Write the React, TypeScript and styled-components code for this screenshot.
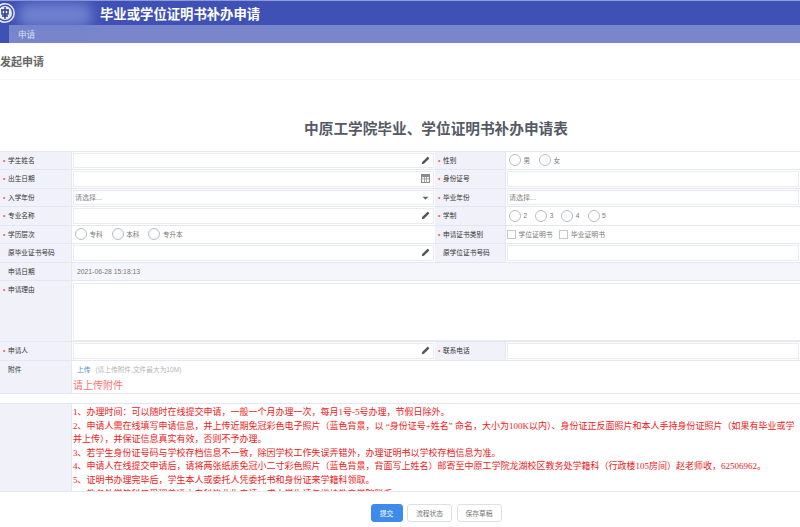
import type { ReactNode } from "react"
import styled, { createGlobalStyle } from "styled-components"

const GlobalStyle = createGlobalStyle`
    html, body {
        margin: 0;
        padding: 0;
        height: 100%;
        overflow: hidden;
        background: #fff;
        font-family: "Liberation Sans", "Noto Sans CJK SC", sans-serif;
    }
`

const Page = styled.div`
    display: flex;
    flex-direction: column;
    width: 800px;
    height: 527px;
    overflow: hidden;
`
const Header = styled.div`
    position: relative;
    z-index: 1;
    display: flex;
    align-items: center;
    flex: 0 0 25px;
    min-height: 0;
    height: 25px;
    background: #3f51b5;
    border-top: 1px solid #8f9bd8;
    box-sizing: border-box;
`
const Logo = styled.svg`
    flex: 0 0 16px;
    width: 16px;
    height: 24px;
`
const BlurredName = styled.div`
    width: 74px;
    height: 24px;
    margin: 3px 0 0 2px;
    background: #6f80cf;
    border-radius: 10px;
    filter: blur(6px);
`
const HeaderTitle = styled.div`
    margin-left: 8px;
    font-size: 13.35px;
    font-weight: 700;
    color: #fff;
    white-space: nowrap;
`
const Nav = styled.div`
    display: flex;
    align-items: center;
    flex: 0 0 18px;
    background: #7986cb;
    border-left: 9px solid #3f51b5;
    padding-left: 9px;
    font-size: 8.6px;
    color: #dfe3f5;
`
const Scroller = styled.div`
    flex: 1;
    min-height: 0;
    overflow: hidden;
`
const PageTitle = styled.div`
    height: 36px;
    line-height: 38px;
    font-size: 11px;
    font-weight: 700;
    color: #666;
    border-bottom: 1px solid #f6f6f6;
`
const FormTitle = styled.h1`
    margin: 0;
    height: 70.5px;
    padding: 39px 0 0 72px;
    box-sizing: border-box;
    text-align: center;
    font-size: 14.67px;
    line-height: 20px;
    font-weight: 700;
    color: #555a66;
`
const Grid = styled.div<{ $ruled?: boolean }>`
    display: grid;
    grid-template-columns: 72px 363px 71px 294px;
    grid-auto-rows: 18.5px;
    border-top: ${p => (p.$ruled ? "1px solid #e6e8f3" : "none")};
`
const Label = styled.div<{ $tall?: boolean }>`
    display: flex;
    align-items: ${p => (p.$tall ? "flex-start" : "center")};
    padding: ${p => (p.$tall ? "4px 0 0 3px" : "1px 0 0 3px")};
    background: #f0f1f9;
    border-bottom: 1px solid #e4e6f2;
    border-right: 1px solid #e4e6f2;
    box-sizing: border-box;
    font-size: 6.7px;
    line-height: 10px;
    color: #333;
    white-space: nowrap;
`
const Star = styled.span<{ $off?: boolean }>`
    width: 5px;
    font-size: 7px;
    color: ${p => (p.$off ? "transparent" : "#f0625f")};
`
const Cell = styled.div<{ $flat?: boolean }>`
    display: flex;
    align-items: center;
    padding: 1px 1px 1px 1px;
    background: ${p => (p.$flat ? "#f5f6fb" : "#fff")};
    border-bottom: 1px solid #e4e6f2;
    box-sizing: border-box;
    min-width: 0;
`
const Field = styled.div`
    display: flex;
    align-items: center;
    justify-content: space-between;
    width: 100%;
    height: 100%;
    padding: 0 3px 0 1px;
    box-sizing: border-box;
    border: 1px solid #e8eaf4;
    font-size: 7px;
    color: #888;
    background: #fff;
`
const WideRow = styled.div`
    display: grid;
    grid-template-columns: 72px 1fr;
`
const ReasonField = styled.div`
    height: 61px;
    padding: 2px 0 2px 1px;
    box-sizing: border-box;
    border-bottom: 1px solid #e4e6f2;
`
const ReasonBox = styled.div`
    height: 100%;
    border: 1px solid #e8eaf4;
    border-right: none;
`
const Choices = styled.div`
    display: flex;
    align-items: center;
    padding-left: 2px;
    font-size: 6.6px;
    color: #777;
`
const CheckChoices = styled(Choices)`
    padding-left: 0;
    font-size: 6.8px;
`
const Choice = styled.span<{ $gap: number }>`
    display: flex;
    align-items: center;
    gap: 2.5px;
    margin-right: ${p => p.$gap}px;
`
const Radio = styled.i`
    width: 12px;
    height: 12px;
    box-sizing: border-box;
    border: 1px solid #b8bcc8;
    border-radius: 50%;
    background: #fff;
`
const Check = styled.i`
    width: 9px;
    height: 9px;
    box-sizing: border-box;
    border: 1px solid #c4c7d0;
    background: #fff;
`
const DateText = styled.span`
    padding-left: 4px;
    font-size: 6.8px;
    color: #777;
`
const Attach = styled.div`
    height: 33px;
    padding-top: 4px;
    box-sizing: border-box;
    border-bottom: 1px solid #e4e6f2;
    overflow: hidden;
`
const UploadLine = styled.div`
    padding-left: 5px;
    font-size: 6.7px;
    line-height: 10px;
    color: #b5b5b5;
`
const UploadLink = styled.span`
    color: #4a90e2;
    margin-right: 5px;
`
const UploadHint = styled.div`
    margin: 4px 0 0 1px;
    font-family: "Liberation Serif", "Noto Sans CJK SC", serif;
    font-size: 10px;
    line-height: 13px;
    color: #ff7070;
`
const Notes = styled.div`
    margin-top: 9.5px;
    display: grid;
    grid-template-columns: 72px 1fr;
    border-top: 1px solid #e4e6f2;
`
const NotesLabel = styled.div`
    background: #f0f1f9;
    border-right: 1px solid #e4e6f2;
`
const NotesText = styled.div`
    padding: 2px 0 0 1px;
    font-family: "Liberation Serif", "Noto Sans CJK SC", serif;
    font-size: 9px;
    line-height: 13.6px;
    color: #f01818;
    height: 120px;
    overflow: hidden;
`
const NoteLine = styled.p`
    margin: 0;
    white-space: nowrap;
`
const Footer = styled.div`
    display: flex;
    justify-content: center;
    gap: 4.5px;
    flex: 0 0 36px;
    padding: 12px 0 0 72px;
    box-sizing: border-box;
    border-top: 1px solid #e8e8ec;
`
const Button = styled.button<{ $primary?: boolean }>`
    height: 18px;
    padding: 0;
    width: ${p => (p.$primary ? "32px" : "45px")};
    border: 1px solid ${p => (p.$primary ? "#3d8bea" : "#dcdfe6")};
    border-radius: 3px;
    background: ${p => (p.$primary ? "#3d8bea" : "#fff")};
    color: ${p => (p.$primary ? "#fff" : "#777")};
    font-family: inherit;
    font-size: 6.8px;
`
const Icon = styled.svg<{ $fill?: string }>`
    flex: 0 0 auto;
    width: 9px;
    height: 9px;
    fill: ${p => p.$fill || "#555"};
`

const Pencil = () => (
    <Icon viewBox="0 0 12 12">
        <path d="M1 11l.6-3L8.4 1.2a.8.8 0 0 1 1.1 0l1.3 1.3a.8.8 0 0 1 0 1.1L4 10.4z" />
    </Icon>
)

const Calendar = () => (
    <Icon viewBox="0 0 12 12" $fill="#8c8c8c">
        <path d="M0 0h12v12H0zM1.5 4v2h2.5V4zm3.5 0v2h2V4zm3 0v2h2.5V4zM1.5 7v3.5h2.5V7zm3.5 0v3.5h2V7zm3 0v3.5h2.5V7z" fillRule="evenodd" />
    </Icon>
)

const Caret = () => (
    <Icon viewBox="0 0 12 12" $fill="#666">
        <path d="M2 5h8L6 9z" />
    </Icon>
)

const Input = ({ icon, text }: { icon?: ReactNode; text?: string }) => (
    <Field>
        <span>{text}</span>
        {icon}
    </Field>
)

const FieldLabel = ({ text, required = true, tall }: { text: string; required?: boolean; tall?: boolean }) => (
    <Label $tall={tall}>
        <Star $off={!required}>•</Star>
        {text}
    </Label>
)

const Radios = ({ items, gap }: { items: string[]; gap: number }) => (
    <Choices>
        {items.map(item => (
            <Choice key={item} $gap={gap}>
                <Radio />
                {item}
            </Choice>
        ))}
    </Choices>
)

const notes = [
    "1、办理时间：可以随时在线提交申请，一般一个月办理一次，每月1号-5号办理，节假日除外。",
    "2、申请人需在线填写申请信息，并上传近期免冠彩色电子照片（蓝色背景，以 “身份证号+姓名” 命名，大小为100K以内）、身份证正反面照片和本人手持身份证照片（如果有毕业或学",
    "并上传），并保证信息真实有效，否则不予办理。",
    "3、若学生身份证号码与学校存档信息不一致，除因学校工作失误弄错外，办理证明书以学校存档信息为准。",
    "4、申请人在线提交申请后，请将两张纸质免冠小二寸彩色照片（蓝色背景，背面写上姓名）邮寄至中原工学院龙湖校区教务处学籍科（行政楼105房间）赵老师收，62506962。",
    "5、证明书办理完毕后，学生本人或委托人凭委托书和身份证来学籍科领取。",
    "6、教务处学籍科只受理普通本专科毕业生申请，成人学生请与继续教育学院联系67698675。",
]

export default function App() {
    return (
        <Page>
            <GlobalStyle />
            <Header>
                <Logo viewBox="0 0 16 24">
                    <circle cx="5" cy="12" r="10" fill="#eef0fa" />
                    <circle cx="5" cy="12" r="8.4" fill="#3f51b5" />
                    <circle cx="5" cy="12" r="7" fill="#eef0fa" />
                    <path d="M1 9h8M5 6v12M2 15h6M2 9v4h6V9" stroke="#2c3a8c" strokeWidth="1.4" fill="none" />
                </Logo>
                <BlurredName />
                <HeaderTitle>毕业或学位证明书补办申请</HeaderTitle>
            </Header>
            <Nav>申请</Nav>
            <Scroller>
                <PageTitle>发起申请</PageTitle>
                <FormTitle>中原工学院毕业、学位证明书补办申请表</FormTitle>
                <Grid $ruled>
                    <FieldLabel text="学生姓名" />
                    <Cell><Input icon={<Pencil />} /></Cell>
                    <FieldLabel text="性别" />
                    <Cell><Radios items={["男", "女"]} gap={9} /></Cell>

                    <FieldLabel text="出生日期" />
                    <Cell><Input icon={<Calendar />} /></Cell>
                    <FieldLabel text="身份证号" />
                    <Cell><Input /></Cell>

                    <FieldLabel text="入学年份" />
                    <Cell><Input text="请选择..." icon={<Caret />} /></Cell>
                    <FieldLabel text="毕业年份" />
                    <Cell><Input text="请选择..." /></Cell>

                    <FieldLabel text="专业名称" />
                    <Cell><Input icon={<Pencil />} /></Cell>
                    <FieldLabel text="学制" />
                    <Cell><Radios items={["2", "3", "4", "5"]} gap={8} /></Cell>

                    <FieldLabel text="学历层次" />
                    <Cell><Radios items={["专科", "本科", "专升本"]} gap={9} /></Cell>
                    <FieldLabel text="申请证书类别" />
                    <Cell>
                        <CheckChoices>
                            <Choice $gap={7}><Check />学位证明书</Choice>
                            <Choice $gap={0}><Check />毕业证明书</Choice>
                        </CheckChoices>
                    </Cell>

                    <FieldLabel text="原毕业证书号码" required={false} />
                    <Cell><Input icon={<Pencil />} /></Cell>
                    <FieldLabel text="原学位证书号码" required={false} />
                    <Cell><Input /></Cell>

                    <FieldLabel text="申请日期" required={false} />
                    <Cell $flat><DateText>2021-06-28 15:18:13</DateText></Cell>
                    <Cell $flat />
                    <Cell $flat />
                </Grid>
                <WideRow>
                    <FieldLabel text="申请理由" tall />
                    <ReasonField><ReasonBox /></ReasonField>
                </WideRow>
                <Grid>
                    <FieldLabel text="申请人" />
                    <Cell><Input icon={<Pencil />} /></Cell>
                    <FieldLabel text="联系电话" />
                    <Cell><Input /></Cell>
                </Grid>
                <WideRow>
                    <FieldLabel text="附件" required={false} tall />
                    <Attach>
                        <UploadLine><UploadLink>上传</UploadLink>(请上传附件,文件最大为10M)</UploadLine>
                        <UploadHint>请上传附件</UploadHint>
                    </Attach>
                </WideRow>
                <Notes>
                    <NotesLabel />
                    <NotesText>
                        {notes.map(line => <NoteLine key={line}>{line}</NoteLine>)}
                    </NotesText>
                </Notes>
            </Scroller>
            <Footer>
                <Button $primary>提交</Button>
                <Button>流程状态</Button>
                <Button>保存草稿</Button>
            </Footer>
        </Page>
    )
}
